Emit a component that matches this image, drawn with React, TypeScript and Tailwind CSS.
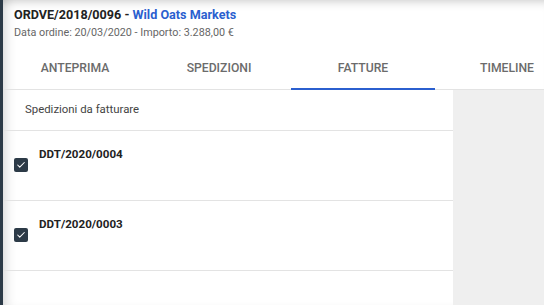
import { Check } from "lucide-react";

const tabs = ["Anteprima", "Spedizioni", "Fatture", "Timeline"];
const rows = ["DDT/2020/0004", "DDT/2020/0003"];

export default function App() {
  return (
    <div className="flex h-[305px] w-[544px] overflow-hidden bg-[#2c3a47] font-['Roboto','Liberation_Sans',sans-serif]">
      <div className="ml-[3px] flex min-w-0 flex-1 flex-col bg-white shadow-[inset_10px_0_12px_-8px_rgba(0,0,0,0.18),inset_0_10px_10px_-8px_rgba(0,0,0,0.18)]">
        <div className="px-[11px] pt-[7px]">
          <div className="text-[12.6px] font-bold leading-[16px] text-[#222]">
            ORDVE/2018/0096 - <span className="text-[#2b5fcf]">Wild Oats Markets</span>
          </div>
          <div className="mt-[3px] text-[10.8px] leading-[14px] text-[#666]">
            Data ordine: 20/03/2020 - Importo: 3.288,00 €
          </div>
        </div>
        <div className="mt-[10px] flex h-[40px] shrink-0 border-b border-[#e3e3e3]">
          {tabs.map((t, i) => (
            <div
              key={t}
              className={
                "relative flex w-[144px] shrink-0 items-center justify-center pb-[3px] text-[12.2px] font-medium uppercase text-[#6b6b6b] " +
                (i === 2 ? "-mb-px border-b-2 border-[#2b5fcf] pt-[1px]" : "")
              }
            >
              {t}
            </div>
          ))}
        </div>
        <div className="flex flex-1">
          <div className="w-[450px] shrink-0">
            <div className="flex h-[41px] items-center border-b border-[#e3e3e3] px-[22px] text-[11.4px] text-[#444]">
              Spedizioni da fatturare
            </div>
            {rows.map((r) => (
              <div key={r} className="flex h-[70px] border-b border-[#e3e3e3] pl-[11px] pt-[16px]">
                <div className="mt-[11px] flex h-[14px] w-[14px] items-center justify-center rounded-[2px] bg-[#2c3a47]">
                  <Check className="h-[10px] w-[10px] text-white" strokeWidth={2.5} />
                </div>
                <div className="ml-[11px] text-[11.6px] font-bold leading-[14px] text-[#222]">{r}</div>
              </div>
            ))}
          </div>
          <div className="flex-1 bg-[#efefef]" />
        </div>
      </div>
    </div>
  );
}
